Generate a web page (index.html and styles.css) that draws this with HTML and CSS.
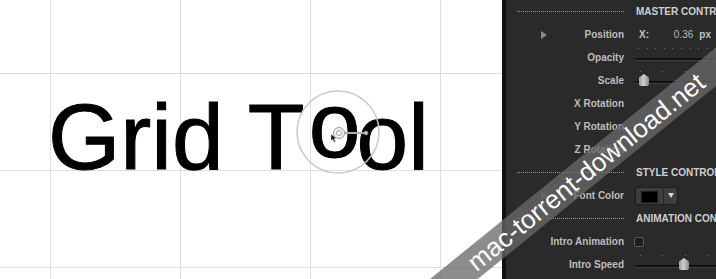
FILE: index.html
```html
<!DOCTYPE html>
<html>
<head>
<meta charset="utf-8">
<link rel="stylesheet" href="styles.css">
</head>
<body>
<div class="app">
  <div class="canvas">
    <div class="title">Grid T<span class="dragged">o</span>ol</div>
    <svg class="overlay" width="502" height="279" viewBox="0 0 502 279">
      <circle cx="338" cy="132" r="41" fill="none" stroke="#c8c8c8" stroke-width="1.5"/>
      <line x1="344" y1="133" x2="365" y2="133" stroke="#8a8a8a" stroke-width="2.2"/>
      <line x1="344" y1="133" x2="365" y2="133" stroke="#d8d8d8" stroke-width="0.9"/>
      <circle cx="366" cy="133" r="2" fill="#d0d0d0" stroke="#777" stroke-width="0.8"/>
      <circle cx="339" cy="133" r="5.5" fill="#f2f2f2" stroke="#9a9a9a" stroke-width="1"/>
      <circle cx="339" cy="133" r="2.6" fill="none" stroke="#b0b0b0" stroke-width="1"/>
      <path d="M331 134 L331 141 L332.8 139.4 L334.3 142.4 L335.6 141.8 L334.2 138.8 L336.6 138.6 Z" fill="#111" stroke="#fff" stroke-width="0.5"/>
    </svg>
  </div>
  <div class="panel">
    <div class="row header"><div class="dots"></div><div class="htext">MASTER CONTROLS</div></div>
    <div class="row"><div class="label"><span class="tri"></span>Position</div>
      <div class="value pos"><b>X:</b><span class="num">0.36</span><b class="unit">px</b></div></div>
    <div class="row"><div class="label">Opacity</div><div class="value slider dense"></div></div>
    <div class="row"><div class="label">Scale</div><div class="value slider"><span class="thumb" style="margin-left:4px"></span></div></div>
    <div class="row"><div class="label">X Rotation</div><div class="value"></div></div>
    <div class="row"><div class="label">Y Rotation</div><div class="value"></div></div>
    <div class="row"><div class="label">Z Rotation</div><div class="value"></div></div>
    <div class="row header"><div class="dots"></div><div class="htext">STYLE CONTROLS</div></div>
    <div class="row"><div class="label"><span class="tri dim"></span>Font Color</div>
      <div class="value"><div class="colorpick"><span class="swatch"></span><span class="drop"></span></div></div></div>
    <div class="row header"><div class="dots"></div><div class="htext">ANIMATION CONTROLS</div></div>
    <div class="row"><div class="label">Intro Animation</div><div class="value"><span class="check"></span></div></div>
    <div class="row"><div class="label">Intro Speed</div><div class="value slider"><span class="thumb" style="margin-left:44px"></span></div></div>
  </div>
  <div class="watermark">mac-torrent-download.net</div>
</div>
</body>
</html>
```

FILE: styles.css
```css
html, body {
  margin: 0;
  padding: 0;
  width: 716px;
  height: 279px;
  overflow: hidden;
  background: #fff;
}

.app {
  position: relative;
  display: flex;
  width: 716px;
  height: 279px;
  overflow: hidden;
  font-family: "Liberation Sans", Arial, sans-serif;
}

.canvas {
  position: relative;
  width: 502px;
  flex: none;
  background-color: #fff;
  background-image:
    linear-gradient(to right, #dedede 0 1px, transparent 1px),
    linear-gradient(to bottom, #dedede 0 1px, transparent 1px);
  background-size: 130px 97px;
  background-position: 50px 73px;
  padding: 91px 0 0 48px;
  box-sizing: border-box;
}

.title {
  font-family: "Liberation Sans", Arial, sans-serif;
  font-size: 93px;
  line-height: 93px;
  color: #000;
  -webkit-text-stroke: 1px #000;
  white-space: nowrap;
}

.dragged {
  display: inline-block;
  transform: translate(4px, -12px);
}

.overlay {
  position: absolute;
  left: 0;
  top: 0;
}

.panel {
  flex: 1;
  background: #2a2a2a;
  border-left: 4px solid #111;
  overflow: hidden;
}

.row {
  display: grid;
  grid-template-columns: 118px 80px;
  column-gap: 12px;
  height: 23px;
  align-items: center;
}

.label {
  display: flex;
  align-items: center;
  justify-content: flex-end;
  font-size: 10px;
  font-weight: bold;
  color: #bdbdbd;
  white-space: nowrap;
}

.tri {
  width: 0;
  height: 0;
  border-left: 6px solid #8a8a8a;
  border-top: 4px solid transparent;
  border-bottom: 4px solid transparent;
  margin-left: 35px;
  margin-right: auto;
}

.tri.dim {
  border-left-color: #6a6a6a;
}

.dots {
  margin-left: 11px;
  border-top: 1px dotted #9a9a9a;
  height: 0;
}

.htext {
  font-size: 10px;
  font-weight: bold;
  color: #cfcfcf;
  white-space: nowrap;
  overflow: visible;
}

.value {
  height: 23px;
  display: flex;
  align-items: center;
}

.pos {
  font-size: 10px;
  color: #c4c4c4;
  padding: 0 5px 0 3px;
}

.pos .num {
  margin-left: auto;
  font-weight: normal;
  color: #b8b8b8;
}

.pos .unit {
  margin-left: 6px;
}

.slider {
  align-items: flex-start;
  margin-left: -1px;
  background-image:
    repeating-linear-gradient(to right, #707070 0 1px, transparent 1px 22.4px),
    linear-gradient(#111, #111),
    linear-gradient(#3e3e3e, #3e3e3e);
  background-size: 100% 1px, 100% 2px, 100% 1px;
  background-position: 5px 2px, 0 12px, 0 14px;
  background-repeat: no-repeat;
}

.slider.dense {
  background-image:
    repeating-linear-gradient(to right, #707070 0 1px, transparent 1px 8.6px),
    linear-gradient(#111, #111),
    linear-gradient(#3e3e3e, #3e3e3e);
  background-position: 3px 2px, 0 12px, 0 14px;
}

.thumb {
  display: block;
  width: 10px;
  height: 12px;
  margin-top: 5px;
  background: linear-gradient(to right, #9a9a9a, #d0d0d0 45%, #8a8a8a);
  clip-path: polygon(50% 0, 100% 30%, 100% 100%, 0 100%, 0 30%);
  border-radius: 0 0 2px 2px;
}

.colorpick {
  display: flex;
  width: 43px;
  height: 18px;
  box-sizing: border-box;
  border: 1px solid #1c1c1c;
  border-radius: 3px;
  background: #3e3e3e;
  margin-left: -1px;
}

.swatch {
  width: 15px;
  height: 10px;
  margin: 3px 0 0 5px;
  background: #000;
  border: 1px solid #1a1a1a;
}

.drop {
  flex: 1;
  margin-left: 5px;
  border-left: 1px solid #262626;
  position: relative;
  display: flex;
  align-items: center;
  justify-content: center;
}

.drop::after {
  content: "";
  width: 0;
  height: 0;
  border-top: 5px solid #d8d8d8;
  border-left: 3px solid transparent;
  border-right: 3px solid transparent;
}

.check {
  display: block;
  width: 10px;
  height: 10px;
  box-sizing: border-box;
  margin-left: -2px;
  border: 1px solid #5a5a5a;
  border-radius: 2px;
  background: #1f1f1f;
}

.watermark {
  position: absolute;
  left: 236px;
  top: 157px;
  width: 700px;
  height: 30px;
  transform: rotate(-39deg);
  background: rgba(105, 105, 105, 0.77);
  color: #fff;
  font-family: "Liberation Sans", Arial, sans-serif;
  font-size: 26px;
  line-height: 30px;
  display: flex;
  align-items: center;
  justify-content: center;
  white-space: nowrap;
}
```
